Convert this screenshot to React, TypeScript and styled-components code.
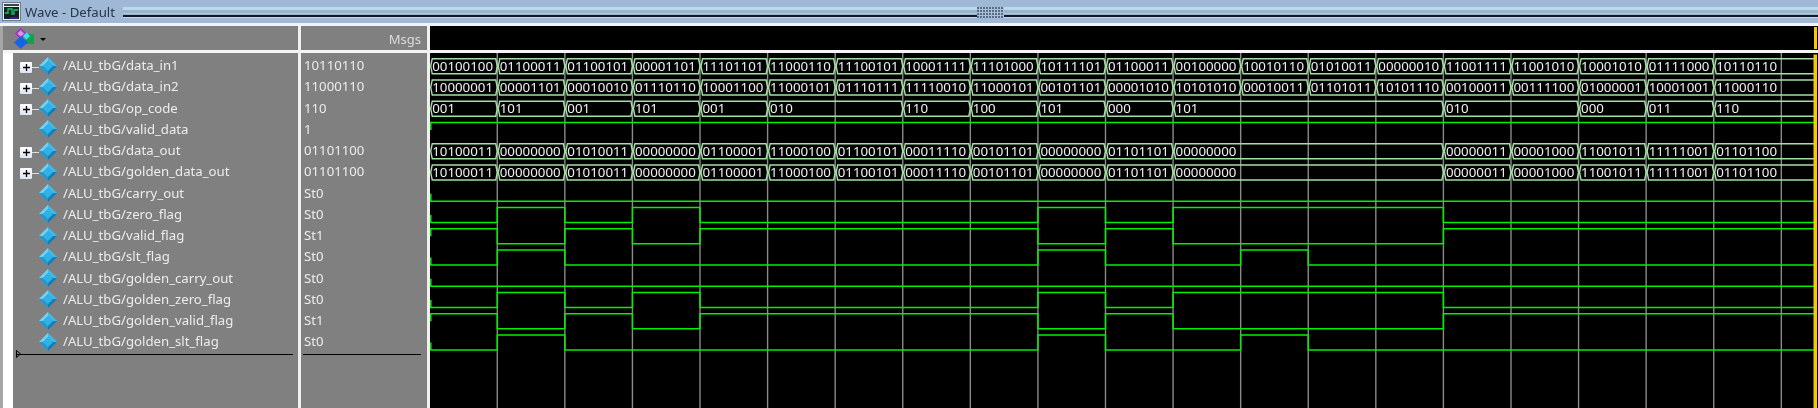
import styled, { createGlobalStyle } from "styled-components";

const GlobalStyle = createGlobalStyle`
  html, body {
    margin: 0;
    padding: 0;
    background: #000;
    overflow: hidden;
  }
  #root {
    width: 1818px;
    height: 408px;
  }
`;

const UI_FONT = `"Noto Sans", "Liberation Sans", sans-serif`;

type Signal = {
  name: string;
  value: string;
  expandable?: boolean;
};

const signals: Signal[] = [
  { name: "/ALU_tbG/data_in1", value: "10110110", expandable: true },
  { name: "/ALU_tbG/data_in2", value: "11000110", expandable: true },
  { name: "/ALU_tbG/op_code", value: "110", expandable: true },
  { name: "/ALU_tbG/valid_data", value: "1" },
  { name: "/ALU_tbG/data_out", value: "01101100", expandable: true },
  { name: "/ALU_tbG/golden_data_out", value: "01101100", expandable: true },
  { name: "/ALU_tbG/carry_out", value: "St0" },
  { name: "/ALU_tbG/zero_flag", value: "St0" },
  { name: "/ALU_tbG/valid_flag", value: "St1" },
  { name: "/ALU_tbG/slt_flag", value: "St0" },
  { name: "/ALU_tbG/golden_carry_out", value: "St0" },
  { name: "/ALU_tbG/golden_zero_flag", value: "St0" },
  { name: "/ALU_tbG/golden_valid_flag", value: "St1" },
  { name: "/ALU_tbG/golden_slt_flag", value: "St0" },
];

// every bus is a list of [clock index, value]
const dataIn1 = "00100100 01100011 01100101 00001101 11101101 11000110 11100101 10001111 11101000 10111101 01100011 00100000 10010110 01010011 00000010 11001111 11001010 10001010 01111000 10110110"
  .split(" ")
  .map((v, i): [number, string] => [i, v]);
const dataIn2 = "10000001 00001101 00010010 01110110 10001100 11000101 01110111 11110010 11000101 00101101 00001010 10101010 00010011 01101011 10101110 00100011 00111100 01000001 10001001 11000110"
  .split(" ")
  .map((v, i): [number, string] => [i, v]);
const opCode: [number, string][] = [
  [0, "001"], [1, "101"], [2, "001"], [3, "101"], [4, "001"], [5, "010"],
  [7, "110"], [8, "100"], [9, "101"], [10, "000"], [11, "101"], [15, "010"],
  [17, "000"], [18, "011"], [19, "110"],
];
const dataOut: [number, string][] = [
  [0, "10100011"], [1, "00000000"], [2, "01010011"], [3, "00000000"],
  [4, "01100001"], [5, "11000100"], [6, "01100101"], [7, "00011110"],
  [8, "00101101"], [9, "00000000"], [10, "01101101"], [11, "00000000"],
  [15, "00000011"], [16, "00001000"], [17, "11001011"], [18, "11111001"],
  [19, "01101100"],
];

const busRows: { row: number; cells: [number, string][] }[] = [
  { row: 0, cells: dataIn1 },
  { row: 1, cells: dataIn2 },
  { row: 2, cells: opCode },
  { row: 4, cells: dataOut },
  { row: 5, cells: dataOut },
];

// high ranges in clock indexes
const zeroHigh: [number, number][] = [[1, 2], [3, 4], [9, 10], [11, 15]];
const sltHigh: [number, number][] = [[1, 2], [9, 10], [12, 13]];
const validLow = zeroHigh;

const bitRows: { row: number; high: [number, number][]; inverted?: boolean }[] = [
  { row: 3, high: [], inverted: true },
  { row: 6, high: [] },
  { row: 7, high: zeroHigh },
  { row: 8, high: validLow, inverted: true },
  { row: 9, high: sltHigh },
  { row: 10, high: [] },
  { row: 11, high: zeroHigh },
  { row: 12, high: validLow, inverted: true },
  { row: 13, high: sltHigh },
];

const WAVE_END = 1814;
const clockX = (k: number) => 429.7 + 67.58 * k;
const lowY = (row: number) => 73.25 + 21.25 * row;
const highY = (row: number) => lowY(row) - 15;

const busPath = (row: number, cells: [number, string][]) => {
  const top = highY(row);
  const bottom = lowY(row);
  const mid = (top + bottom) / 2;
  return cells
    .map(([k], i) => {
      const x0 = clockX(k) + 1;
      const next = cells[i + 1];
      if (!next) {
        return `M${x0} ${mid}L${x0 + 1.5} ${top}H${WAVE_END}M${x0} ${mid}L${x0 + 1.5} ${bottom}H${WAVE_END}`;
      }
      const x1 = clockX(next[0]);
      return `M${x0} ${mid}L${x0 + 1.5} ${top}H${x1 - 1.5}L${x1} ${mid}L${x1 - 1.5} ${bottom}H${x0 + 1.5}Z`;
    })
    .join("");
};

const bitPath = (row: number, high: [number, number][], inverted?: boolean) => {
  const up = highY(row);
  const down = lowY(row);
  const base = inverted ? up : down;
  const other = inverted ? down : up;
  let d = `M430.8 ${(up + down) / 2}V${base}`;
  for (const [from, to] of high) {
    d += `H${clockX(from)}V${other}H${clockX(to)}V${base}`;
  }
  return d + `H${WAVE_END}`;
};

const TitleIcon = () => (
  <svg width="19" height="19" viewBox="0 0 19 19">
    <rect x="0" y="0" width="19" height="19" fill="#6f7c8a" />
    <rect x="1" y="1" width="17" height="17" fill="#eceff2" />
    <rect x="2" y="2" width="15" height="2" fill="#39444f" />
    <rect x="2" y="5" width="15" height="12" fill="#0f2422" />
    <path d="M3 11h3V7h4v5h2V8h4" fill="none" stroke="#19c46a" strokeWidth="1.3" />
    <path d="M8 15h8v2H8z" fill="#3d1a9a" />
  </svg>
);

const WaveIcon = () => (
  <svg width="22" height="21" viewBox="14 27 22 21">
    <path d="M20.5 27.5L26 32.5L20.5 37.5L15.5 32.5Z" fill="#b040c8" stroke="#a01fd0" />
    <path d="M20.5 29.5L24 32.5L20.5 35.5L17.5 32.5Z" fill="#c9a0d8" />
    <rect x="26" y="33" width="8" height="10" fill="#17a04a" />
    <path d="M21 35L28 41.5L20.7 47.7L14 41.5Z" fill="#1464e6" />
    <path d="M26.5 31.5L30 35L26.5 38.5L23 35Z" fill="#30e8f5" />
  </svg>
);

const DiamondIcon = () => (
  <svg width="18" height="18" viewBox="0 0 18 18">
    <path d="M9 0L9 4L4 9L0 9Z" fill="#6fd4f7" />
    <path d="M9 0L18 9L14 9L9 4Z" fill="#38bdf0" />
    <path d="M18 9L9 18L9 14L14 9Z" fill="#0d7fbc" />
    <path d="M9 18L0 9L4 9L9 14Z" fill="#1a9ad6" />
    <path d="M9 4L14 9L9 14L4 9Z" fill="#2cb4ea" />
  </svg>
);

const App = () => {
  return (
    <>
      <GlobalStyle />
      <Window>
        <TitleBar>
          <TitleIcon />
          <TitleText>Wave - Default</TitleText>
          <Grip />
          <GripHandle />
          <Grip $width={814} />
        </TitleBar>
        <Panes>
          <Gutter />
          <NamesColumn>
            <HeaderCell>
              <WaveIcon />
              <DropArrow />
            </HeaderCell>
            <HeaderRule />
            <NamesBody>
              {signals.map((s) => (
                <SignalRow key={s.name}>
                  {s.expandable ? (
                    <ExpandBox>
                      <svg width="7" height="7" viewBox="0 0 7 7">
                        <path d="M0 3.5h7M3.5 0v7" stroke="#000" strokeWidth="1.3" />
                      </svg>
                    </ExpandBox>
                  ) : (
                    <ExpandSpacer />
                  )}
                  <Connector $visible={!!s.expandable} />
                  <DiamondIcon />
                  <SignalName>{s.name}</SignalName>
                </SignalRow>
              ))}
              <ListEnd $left={4} $right={5}>
                <EndMarker width="5" height="8" viewBox="0 0 5 8">
                  <path d="M0.5 0.5L4.5 4L0.5 7.5Z" fill="none" stroke="#000" />
                </EndMarker>
              </ListEnd>
            </NamesBody>
          </NamesColumn>
          <Divider />
          <ValuesColumn>
            <HeaderCell $end>
              <MsgsLabel>Msgs</MsgsLabel>
            </HeaderCell>
            <HeaderRule />
            <ValuesBody>
              {signals.map((s) => (
                <ValueRow key={s.name}>{s.value}</ValueRow>
              ))}
              <ListEnd $left={2} $right={6} />
            </ValuesBody>
          </ValuesColumn>
          <Divider />
          <WaveColumn>
            <WaveHeader>
              <Cursor />
            </WaveHeader>
            <HeaderRule />
            <WavePlot viewBox="430 52.5 1388 355.5" width="1388" height="355.5">
              {Array.from({ length: 20 }, (_, i) => (
                <line
                  key={i}
                  x1={clockX(i + 1)}
                  x2={clockX(i + 1)}
                  y1="52.5"
                  y2="408"
                  stroke="#8a8a8a"
                  strokeWidth="1.4"
                />
              ))}
              {busRows.map(({ row, cells }) => (
                <g key={row}>
                  <path
                    d={busPath(row, cells)}
                    fill="none"
                    stroke="#a4e0a4"
                    strokeWidth="1.4"
                  />
                  {cells.map(([k, v]) => (
                    <BusText key={k} x={clockX(k) + 2.5} y={lowY(row) - 3}>
                      {v}
                    </BusText>
                  ))}
                </g>
              ))}
              {bitRows.map(({ row, high, inverted }) => (
                <path
                  key={row}
                  d={bitPath(row, high, inverted)}
                  fill="none"
                  stroke="#00f000"
                  strokeWidth="1.5"
                />
              ))}
              <rect x="1813.5" y="54" width="3.5" height="354" fill="#f5c800" />
            </WavePlot>
          </WaveColumn>
        </Panes>
      </Window>
    </>
  );
};

export default App;

const Window = styled.div`
  width: 1818px;
  height: 408px;
  display: flex;
  flex-direction: column;
  overflow: hidden;
  font-family: ${UI_FONT};
  filter: blur(0.3px);
`;

const TitleBar = styled.div`
  height: 23px;
  flex: none;
  display: flex;
  align-items: center;
  padding-left: 2px;
  box-sizing: border-box;
  background: #9fb8d5;
`;

const TitleText = styled.span`
  margin: 0 8px 0 4px;
  font-size: 13.2px;
  color: #27364b;
  white-space: nowrap;
`;

const Grip = styled.div<{ $width?: number }>`
  flex: ${(p) => (p.$width ? `0 0 ${p.$width}px` : "1")};
  height: 11px;
  margin-top: 1px;
  background: linear-gradient(
    to bottom,
    #bcd8ec 0,
    #bcd8ec 3px,
    #9ab4cc 3px,
    #9ab4cc 6px,
    #c0d8ea 6px,
    #8ca4bc 8px,
    #101828 8.5px,
    #101828 9.5px,
    #c0d8ea 10px,
    #c0d8ea 11px
  );
`;

const GripHandle = styled.div`
  width: 27px;
  height: 11px;
  margin-top: 1px;
  flex: none;
  background-color: #a8c0dc;
  background-image: radial-gradient(circle at 1px 1px, #5a6c84 0.9px, transparent 1px);
  background-size: 3px 3px;
`;

const Panes = styled.div`
  flex: 1;
  display: flex;
  border-top: 3px solid #f4f4f4;
  min-height: 0;
`;

const Gutter = styled.div`
  width: 3px;
  flex: none;
  background: #a6a6a6;
`;

const NamesColumn = styled.div`
  width: 295px;
  flex: none;
  display: flex;
  flex-direction: column;
  background: #808080;
`;

const ValuesColumn = styled.div`
  width: 126px;
  flex: none;
  display: flex;
  flex-direction: column;
  background: #808080;
`;

const WaveColumn = styled.div`
  flex: 1;
  display: flex;
  flex-direction: column;
  background: #000;
`;

const Divider = styled.div`
  width: 3px;
  flex: none;
  background: #f0f0f0;
`;

const HeaderCell = styled.div<{ $end?: boolean }>`
  height: 24px;
  flex: none;
  display: flex;
  align-items: center;
  justify-content: ${(p) => (p.$end ? "flex-end" : "flex-start")};
  padding: ${(p) => (p.$end ? "0 6px 0 0" : "0 0 0 11px")};
  box-sizing: border-box;
`;

const DropArrow = styled.span`
  width: 0;
  height: 0;
  margin-left: 4px;
  margin-top: 3px;
  border-left: 3px solid transparent;
  border-right: 3px solid transparent;
  border-top: 3px solid #000;
`;

const MsgsLabel = styled.span`
  font-size: 13px;
  color: #dcdcdc;
  margin-top: 1px;
`;

const HeaderRule = styled.div`
  height: 2.5px;
  flex: none;
  background: #f4f4f4;
`;

const NamesBody = styled.div`
  flex: 1;
  border-left: 10px solid #fff;
  padding-top: 2.5px;
`;

const ValuesBody = styled.div`
  flex: 1;
  padding-top: 2.5px;
`;

const SignalRow = styled.div`
  height: 21.25px;
  display: flex;
  align-items: center;
  padding-left: 7px;
`;

const ExpandBox = styled.div`
  width: 12px;
  height: 11px;
  margin-top: 3px;
  flex: none;
  display: flex;
  align-items: center;
  justify-content: center;
  background: linear-gradient(to bottom, #fff, #dfe4f2);
  border-radius: 1px;
`;

const ExpandSpacer = styled.div`
  width: 12px;
  flex: none;
`;

const Connector = styled.div<{ $visible: boolean }>`
  width: 7px;
  height: 1px;
  margin-top: 3px;
  flex: none;
  background: ${(p) => (p.$visible ? "#e0e0e0" : "transparent")};
`;

const SignalName = styled.span`
  margin: -1px 0 0 6px;
  font-size: 13.2px;
  color: #ececec;
  white-space: nowrap;
`;

const ValueRow = styled.div`
  height: 21.25px;
  display: flex;
  align-items: center;
  padding: 0 0 1px 3px;
  box-sizing: border-box;
  font-size: 13.2px;
  color: #ececec;
`;

const ListEnd = styled.div<{ $left: number; $right: number }>`
  position: relative;
  height: 1px;
  margin: 1px ${(p) => p.$right}px 0 ${(p) => p.$left}px;
  background: #000;
`;

const EndMarker = styled.svg`
  position: absolute;
  left: -1px;
  top: -4px;
`;

const WaveHeader = styled.div`
  height: 24px;
  flex: none;
  display: flex;
  justify-content: flex-end;
  padding: 1px 1px 1px 0;
  box-sizing: border-box;
`;

const Cursor = styled.div`
  width: 3.5px;
  background: #f5c800;
`;

const WavePlot = styled.svg`
  display: block;
  flex: none;
`;

const BusText = styled.text`
  font-family: ${UI_FONT};
  font-size: 13.3px;
  fill: #f0f0f0;
`;
